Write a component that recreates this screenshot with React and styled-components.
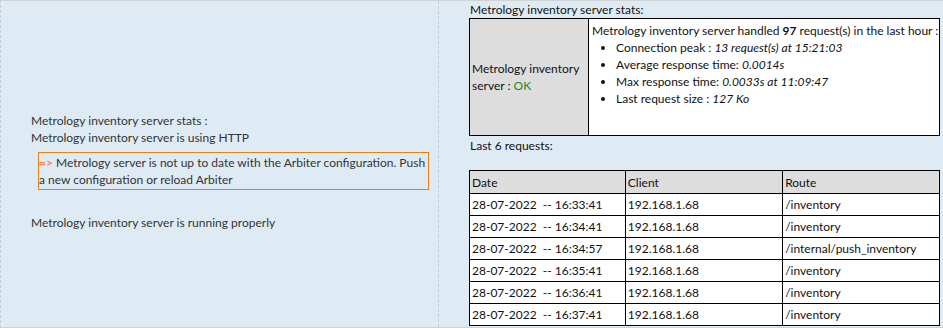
import styled, { createGlobalStyle } from "styled-components";

const GlobalStyle = createGlobalStyle`
  body {
    margin: 0;
    font-family: Lato, "Open Sans", sans-serif;
    font-size: 12px;
    color: #333;
  }
`;

const Page = styled.div`
  width: 943px;
  height: 328px;
  box-sizing: border-box;
  display: flex;
  background: #dfebf4;
  border-top: 1px solid #cfd3d6;
  border-bottom: 1px solid #cfd3d6;
  border-left: 1px dashed #c9cdd1;
`;

const LeftPanel = styled.div`
  width: 438px;
  flex-shrink: 0;
  border-right: 1px dashed #c9cdd1;
  display: flex;
  flex-direction: column;
  justify-content: center;
  padding: 14px 9px 0 30px;
  box-sizing: border-box;
  line-height: 17px;
`;

const Line = styled.div``;

const Warning = styled.div`
  margin: 6px 0 0 7px;
  border: 1px solid #f07d12;
  padding: 1px 0;
  line-height: 17px;
`;

const Arrow = styled.span`
  color: #f4884a;
  font-weight: bold;
`;

const Spacer = styled.div`
  height: ${(p) => p.h}px;
`;

const RightPanel = styled.div`
  flex: 1;
  padding: 1px 2px 0 30px;
  color: #111;
`;

const Caption = styled.div`
  line-height: 15px;
  padding-left: 1px;
  margin-top: ${(p) => p.mt || 0}px;
`;

const StatsTable = styled.table`
  border-collapse: collapse;
  width: 471px;
  height: 118px;
  margin-top: 1px;
`;

const StatusCell = styled.td`
  width: 114px;
  background: #dddddd;
  border: 1px solid #000;
  vertical-align: middle;
  padding: 0 2px;
  line-height: 17px;
`;

const Ok = styled.span`
  color: #1b8a2d;
`;

const DetailCell = styled.td`
  background: #fff;
  border: 1px solid #000;
  vertical-align: top;
  padding: 3px 0 0 3px;
  line-height: 17px;
`;

const Intro = styled.div`
  white-space: nowrap;
`;

const StatList = styled.ul`
  margin: 0;
  padding-left: 24px;
`;

const RequestsTable = styled.table`
  border-collapse: collapse;
  width: 471px;
  margin-top: 17px;
`;

const Th = styled.th`
  background: #dddddd;
  border: 1px solid #000;
  text-align: left;
  font-weight: normal;
  height: 23px;
  padding: 0 2px;
  width: ${(p) => p.w}px;
  box-sizing: border-box;
`;

const Td = styled.td`
  background: #fff;
  border: 1px solid #000;
  height: 21px;
  padding: 0 2px;
  white-space: pre;
`;

const requests = [
  ["28-07-2022  -- 16:33:41", "192.168.1.68", "/inventory"],
  ["28-07-2022  -- 16:34:41", "192.168.1.68", "/inventory"],
  ["28-07-2022  -- 16:34:57", "192.168.1.68", "/internal/push_inventory"],
  ["28-07-2022  -- 16:35:41", "192.168.1.68", "/inventory"],
  ["28-07-2022  -- 16:36:41", "192.168.1.68", "/inventory"],
  ["28-07-2022  -- 16:37:41", "192.168.1.68", "/inventory"],
];

export default function App() {
  return (
    <>
      <GlobalStyle />
      <Page>
        <LeftPanel>
          <Line>Metrology inventory server stats :</Line>
          <Line>Metrology inventory server is using HTTP</Line>
          <Warning>
            <Arrow>=&gt;</Arrow> Metrology server is not up to date with the
            Arbiter configuration. Push a new configuration or reload Arbiter
          </Warning>
          <Spacer h={24} />
          <Line>Metrology inventory server is running properly</Line>
        </LeftPanel>
        <RightPanel>
          <Caption>Metrology inventory server stats:</Caption>
          <StatsTable>
            <tbody>
              <tr>
                <StatusCell>
                  Metrology inventory server : <Ok>OK</Ok>
                </StatusCell>
                <DetailCell>
                  <Intro>
                    Metrology inventory server handled <b>97</b> request(s) in
                    the last hour :
                  </Intro>
                  <StatList>
                    <li>
                      Connection peak : <i>13 request(s) at 15:21:03</i>
                    </li>
                    <li>
                      Average response time: <i>0.0014s</i>
                    </li>
                    <li>
                      Max response time: <i>0.0033s at 11:09:47</i>
                    </li>
                    <li>
                      Last request size : <i>127 Ko</i>
                    </li>
                  </StatList>
                </DetailCell>
              </tr>
            </tbody>
          </StatsTable>
          <Caption mt={2}>Last 6 requests:</Caption>
          <RequestsTable>
            <thead>
              <tr>
                <Th w={156}>Date</Th>
                <Th w={158}>Client</Th>
                <Th w={157}>Route</Th>
              </tr>
            </thead>
            <tbody>
              {requests.map((r) => (
                <tr key={r[0]}>
                  {r.map((c, i) => (
                    <Td key={i}>{c}</Td>
                  ))}
                </tr>
              ))}
            </tbody>
          </RequestsTable>
        </RightPanel>
      </Page>
    </>
  );
}
